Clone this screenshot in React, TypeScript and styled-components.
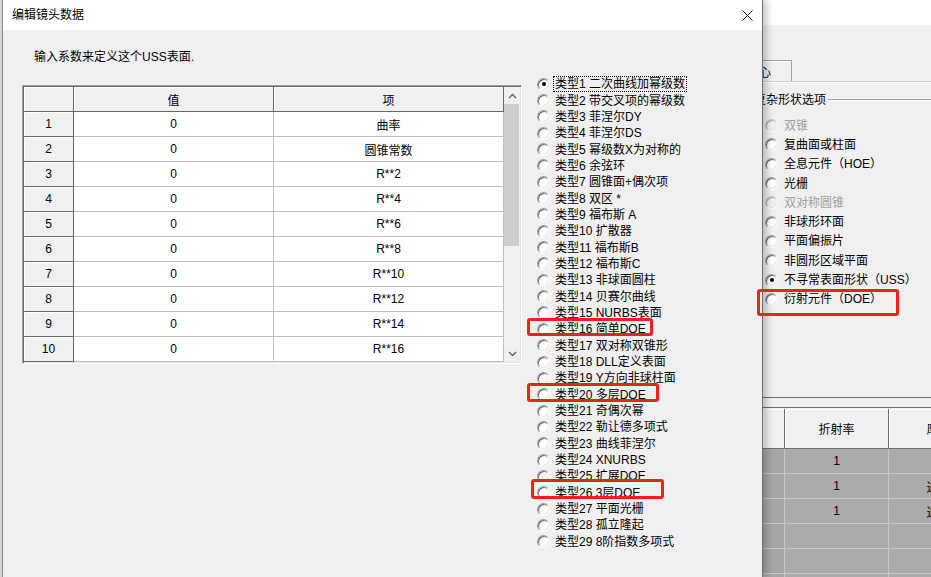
import React from "react";
import styled, { createGlobalStyle } from "styled-components";

const GlobalStyle = createGlobalStyle`
  html, body {
    margin: 0;
    padding: 0;
  }
  body {
    font-family: "Liberation Sans", "Noto Sans CJK SC", sans-serif;
    font-size: 12px;
    color: #000;
    background: #f0f0f0;
  }
`;

const Screen = styled.div`
  position: relative;
  width: 931px;
  height: 577px;
  overflow: hidden;
  display: flex;
  background: #f0f0f0;
`;

const EdgeStrip = styled.div`
  flex: none;
  width: 3px;
  box-sizing: border-box;
  background: #d6d6d6;
  border-right: 1px solid #8c8c8c;
`;

const Dialog = styled.div`
  position: relative;
  z-index: 1;
  flex: none;
  width: 760px;
  box-sizing: border-box;
  display: flex;
  flex-direction: column;
  background: #f0f0f0;
  border-right: 1px solid #707070;
  box-shadow: 4px 0 7px rgba(0, 0, 0, 0.22);
`;

const TitleBar = styled.div`
  flex: none;
  height: 30px;
  display: flex;
  align-items: center;
  justify-content: space-between;
  padding-left: 9px;
  background: #fff;
`;

const TitleText = styled.span`
  font-size: 12px;
  line-height: 14px;
`;

const CloseButton = styled.div`
  width: 30px;
  height: 30px;
  display: flex;
  align-items: center;
  justify-content: center;
`;

const DialogBody = styled.div`
  flex: 1;
  display: flex;
  align-items: flex-start;
`;

const LeftColumn = styled.div`
  display: flex;
  flex-direction: column;
  padding: 20px 0 0 19px;
`;

const Prompt = styled.div`
  margin-left: 12px;
  line-height: 14px;
  height: 14px;
`;

const GridFrame = styled.div`
  margin-top: 21px;
  width: 500px;
  box-sizing: border-box;
  display: flex;
  border: 1px solid;
  border-color: #a0a0a0 #ffffff #ffffff #a0a0a0;
  box-shadow: inset 1px 1px 0 #696969, inset -1px -1px 0 #e3e3e3;
  padding: 1px 1px 1px 1px;
`;

const Table = styled.div`
  display: grid;
  grid-template-columns: 50px 200px 230px;
  grid-auto-rows: 25px;
`;

const HeadCell = styled.div`
  box-sizing: border-box;
  display: flex;
  align-items: center;
  justify-content: center;
  background: #f0f0f0;
  border-right: 1px solid #696969;
  border-bottom: 1px solid #696969;
  box-shadow: inset 1px 1px 0 #ffffff;
`;

const DataCell = styled.div`
  box-sizing: border-box;
  display: flex;
  align-items: center;
  justify-content: center;
  background: #fff;
  border-right: 1px solid #c0c0c0;
  border-bottom: 1px solid #c0c0c0;
`;

const ScrollBar = styled.div`
  width: 16px;
  display: flex;
  flex-direction: column;
  background: #f0f0f0;
`;

const ScrollArrow = styled.div`
  flex: none;
  height: 17px;
  display: flex;
  align-items: center;
  justify-content: center;
`;

const ScrollThumb = styled.div`
  flex: none;
  height: 142px;
  width: 15px;
  background: #cdcdcd;
`;

const ScrollTrack = styled.div`
  flex: 1;
`;

const RadioColumn = styled.div`
  margin-left: 15px;
  padding-top: 46px;
  display: flex;
  flex-direction: column;
`;

const RadioRow = styled.div`
  height: 16.35px;
  display: flex;
  align-items: center;
  gap: 4px;
  white-space: nowrap;
`;

const RadioCircle = styled.span<{ $checked?: boolean; $disabled?: boolean }>`
  flex: none;
  width: 13px;
  height: 13px;
  box-sizing: border-box;
  border-radius: 50%;
  display: flex;
  align-items: center;
  justify-content: center;
  border: 1px solid;
  border-color: ${(p) =>
    p.$disabled ? "#c8c8c8 #fff #fff #c8c8c8" : "#a0a0a0 #fff #fff #a0a0a0"};
  background: ${(p) => (p.$disabled ? "#f0f0f0" : "#fff")};
  box-shadow: ${(p) =>
    p.$disabled
      ? "inset 1px 1px 0 #a8a8a8, inset -1px -1px 0 #e3e3e3"
      : "inset 1px 1px 0 #696969, inset -1px -1px 0 #e3e3e3"};

  &::after {
    content: "";
    display: ${(p) => (p.$checked ? "block" : "none")};
    width: 4px;
    height: 4px;
    border-radius: 50%;
    background: #000;
  }
`;

const RadioLabel = styled.span<{ $focused?: boolean; $disabled?: boolean }>`
  line-height: 14px;
  padding: 0 1px;
  color: ${(p) => (p.$disabled ? "#a0a0a0" : "#000")};
  outline: ${(p) => (p.$focused ? "1px dotted #000" : "none")};
`;

const BgWindow = styled.div`
  flex: 1;
  min-width: 0;
  overflow: hidden;
  display: flex;
  flex-direction: column;
  background: #f0f0f0;
`;

const BgTopBar = styled.div`
  flex: none;
  height: 25px;
  background: #fff;
`;

const TabRow = styled.div`
  flex: none;
  height: 56px;
  display: flex;
  align-items: flex-end;
`;

const Tab = styled.div`
  flex: none;
  width: 60px;
  height: 21px;
  margin-left: -31px;
  box-sizing: border-box;
  display: flex;
  align-items: center;
  justify-content: flex-end;
  padding-right: 20px;
  border: 1px solid #a0a0a0;
  border-bottom: none;
  box-shadow: inset 1px 1px 0 #fff;
  background: #f0f0f0;
`;

const TabPage = styled.div`
  flex: none;
  height: 316px;
  box-sizing: border-box;
  border-top: 1px solid #d4d4d4;
  box-shadow: inset 0 1px 0 #fff;
  display: flex;
  flex-direction: column;
`;

const GroupHeader = styled.div`
  margin: 11px 0 0 -9px;
  display: flex;
  align-items: center;
  white-space: nowrap;
`;

const GroupTitle = styled.span`
  line-height: 14px;
`;

const GroupLine = styled.span`
  flex: 1;
  margin-left: 2px;
  height: 0;
  border-top: 1px solid #a0a0a0;
  border-bottom: 1px solid #fff;
`;

const OptionList = styled.div`
  margin-top: 9px;
  display: flex;
  flex-direction: column;
`;

const OptionRow = styled.div`
  height: 19.3px;
  display: flex;
  align-items: center;
  gap: 5px;
  padding-left: 2px;
  white-space: nowrap;
`;

const Splitter = styled.div`
  flex: none;
  height: 9px;
  border-top: 1px solid #6e6e6e;
  border-bottom: 1px solid #6e6e6e;
  margin-bottom: 1px;
`;

const BgTable = styled.div`
  display: grid;
  grid-template-columns: 22px 104px 100px;
  grid-template-rows: 40px;
  grid-auto-rows: 25px;
`;

const BgHeadCell = styled.div`
  box-sizing: border-box;
  display: flex;
  align-items: center;
  justify-content: center;
  background: #f0f0f0;
  border-right: 1px solid #6e6e6e;
  border-bottom: 1px solid #6e6e6e;
  box-shadow: inset 1px 1px 0 #fff;
  white-space: nowrap;
`;

const BgCell = styled.div<{ $lead?: boolean }>`
  box-sizing: border-box;
  display: flex;
  align-items: center;
  justify-content: center;
  background: ${(p) => (p.$lead ? "#a6a6a6" : "#ababab")};
  border-right: 1px solid #c8c8c8;
  border-bottom: 1px solid #c8c8c8;
  white-space: nowrap;
`;

const Highlight = styled.div`
  position: absolute;
  z-index: 5;
  box-sizing: border-box;
  border: 3px solid #f0201c;
  border-radius: 3px;
  pointer-events: none;
`;

const coefItems = ["曲率", "圆锥常数", "R**2", "R**4", "R**6", "R**8", "R**10", "R**12", "R**14", "R**16"];

const surfaceTypes = [
  "类型1 二次曲线加幂级数",
  "类型2 带交叉项的幂级数",
  "类型3 菲涅尔DY",
  "类型4 菲涅尔DS",
  "类型5 幂级数X为对称的",
  "类型6 余弦环",
  "类型7 圆锥面+偶次项",
  "类型8 双区 *",
  "类型9 福布斯 A",
  "类型10 扩散器",
  "类型11 福布斯B",
  "类型12 福布斯C",
  "类型13 非球面圆柱",
  "类型14 贝赛尔曲线",
  "类型15 NURBS表面",
  "类型16 简单DOE",
  "类型17 双对称双锥形",
  "类型18 DLL定义表面",
  "类型19 Y方向非球柱面",
  "类型20 多层DOE",
  "类型21 奇偶次幂",
  "类型22 勒让德多项式",
  "类型23 曲线菲涅尔",
  "类型24 XNURBS",
  "类型25 扩展DOE",
  "类型26 3层DOE",
  "类型27 平面光栅",
  "类型28 孤立隆起",
  "类型29 8阶指数多项式",
];

const shapeOptions = [
  { label: "双锥", disabled: true },
  { label: "复曲面或柱面" },
  { label: "全息元件（HOE）" },
  { label: "光栅" },
  { label: "双对称圆锥", disabled: true },
  { label: "非球形环面" },
  { label: "平面偏振片" },
  { label: "非圆形区域平面" },
  { label: "不寻常表面形状（USS）", checked: true },
  { label: "衍射元件（DOE）" },
];

const bgRows = [
  { n: "1", t: "" },
  { n: "1", t: "通过" },
  { n: "1", t: "通过" },
  { n: "", t: "" },
  { n: "", t: "" },
  { n: "", t: "" },
];

const highlights = [
  { left: 527, top: 318, width: 126, height: 18 },
  { left: 527, top: 383, width: 132, height: 19 },
  { left: 531, top: 479, width: 133, height: 20 },
  { left: 757, top: 289, width: 142, height: 27 },
];

const App: React.FC = () => {
  return (
    <>
      <GlobalStyle />
      <Screen>
        <EdgeStrip />
        <Dialog>
          <TitleBar>
            <TitleText>编辑镜头数据</TitleText>
            <CloseButton>
              <svg width="11" height="11" viewBox="0 0 11 11">
                <path d="M0.5 0.5 L10.5 10.5 M10.5 0.5 L0.5 10.5" stroke="#111" strokeWidth="1" />
              </svg>
            </CloseButton>
          </TitleBar>

          <DialogBody>
            <LeftColumn>
              <Prompt>输入系数来定义这个USS表面.</Prompt>
              <GridFrame>
                <Table>
                  <HeadCell />
                  <HeadCell>值</HeadCell>
                  <HeadCell>项</HeadCell>
                  {coefItems.map((item, i) => (
                    <React.Fragment key={item}>
                      <HeadCell>{i + 1}</HeadCell>
                      <DataCell>0</DataCell>
                      <DataCell>{item}</DataCell>
                    </React.Fragment>
                  ))}
                </Table>
                <ScrollBar>
                  <ScrollArrow>
                    <svg width="9" height="6" viewBox="0 0 9 6">
                      <path d="M1 5 L4.5 1.5 L8 5" stroke="#606060" strokeWidth="1.4" fill="none" />
                    </svg>
                  </ScrollArrow>
                  <ScrollThumb />
                  <ScrollTrack />
                  <ScrollArrow>
                    <svg width="9" height="6" viewBox="0 0 9 6">
                      <path d="M1 1 L4.5 4.5 L8 1" stroke="#606060" strokeWidth="1.4" fill="none" />
                    </svg>
                  </ScrollArrow>
                </ScrollBar>
              </GridFrame>
            </LeftColumn>

            <RadioColumn>
              {surfaceTypes.map((label, i) => (
                <RadioRow key={label}>
                  <RadioCircle $checked={i === 0} />
                  <RadioLabel $focused={i === 0}>{label}</RadioLabel>
                </RadioRow>
              ))}
            </RadioColumn>
          </DialogBody>
        </Dialog>

        <BgWindow>
          <BgTopBar />
          <TabRow>
            <Tab>中心</Tab>
          </TabRow>
          <TabPage>
            <GroupHeader>
              <GroupTitle>复杂形状选项</GroupTitle>
              <GroupLine />
            </GroupHeader>
            <OptionList>
              {shapeOptions.map((o) => (
                <OptionRow key={o.label}>
                  <RadioCircle $checked={o.checked} $disabled={o.disabled} />
                  <RadioLabel $disabled={o.disabled}>{o.label}</RadioLabel>
                </OptionRow>
              ))}
            </OptionList>
          </TabPage>
          <Splitter />
          <BgTable>
            <BgHeadCell />
            <BgHeadCell>折射率</BgHeadCell>
            <BgHeadCell>厚度</BgHeadCell>
            {bgRows.map((r, i) => (
              <React.Fragment key={i}>
                <BgCell $lead />
                <BgCell>{r.n}</BgCell>
                <BgCell>{r.t}</BgCell>
              </React.Fragment>
            ))}
          </BgTable>
        </BgWindow>

        {highlights.map((h, i) => (
          <Highlight key={i} style={{ left: h.left, top: h.top, width: h.width, height: h.height }} />
        ))}
      </Screen>
    </>
  );
};

export default App;
